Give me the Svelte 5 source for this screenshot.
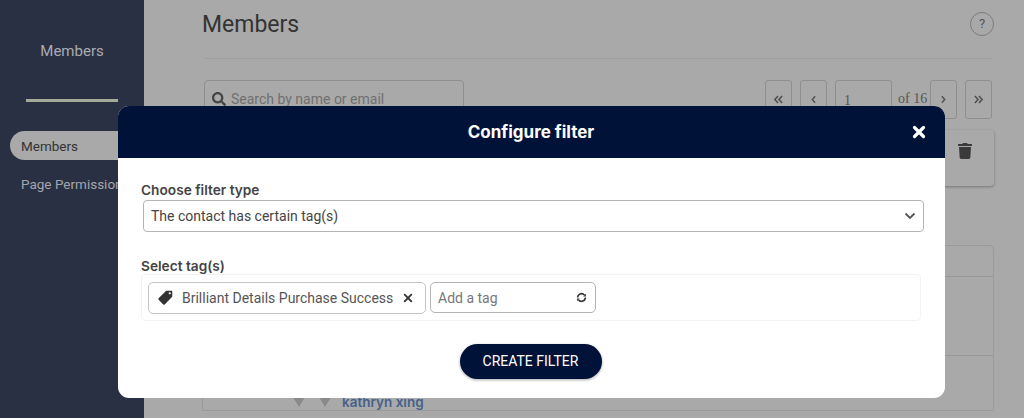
<script>
  let tags = ['Brilliant Details Purchase Success'];
</script>

<div class="page">
  <aside class="sidebar">
    <div class="side-title">Members</div>
    <div class="side-rule"></div>
    <nav class="side-nav">
      <div class="side-item active">Members</div>
      <div class="side-item">Page Permissions</div>
    </nav>
  </aside>

  <main class="main">
    <header class="head">
      <h1>Members</h1>
      <span class="help">?</span>
    </header>

    <div class="toolbar">
      <div class="search">
        <svg viewBox="0 0 512 512" width="14" height="14"><path d="M505 442.700L405.300 343c-4.500-4.500-10.600-7-17-7H372c27.600-35.300 44-79.700 44-128C416 93.100 322.900 0 208 0S0 93.100 0 208s93.100 208 208 208c48.300 0 92.700-16.400 128-44v16.300c0 6.400 2.500 12.500 7 17l99.700 99.700c9.400 9.400 24.600 9.400 33.900 0l28.300-28.300c9.400-9.400 9.400-24.600.1-34zM208 336c-70.700 0-128-57.200-128-128 0-70.700 57.200-128 128-128 70.700 0 128 57.200 128 128 0 70.700-57.200 128-128 128z"/></svg>
        <span>Search by name or email</span>
      </div>
      <div class="pager">
        <span class="pg"><svg viewBox="0 0 10 10" width="9" height="9"><path d="M4.500 1L1 5l3.500 4M9 1L5.500 5 9 9"/></svg></span>
        <span class="pg"><svg viewBox="0 0 6 10" width="5" height="9"><path d="M5 1L1.500 5 5 9"/></svg></span>
        <span class="pg-input">1</span>
        <span class="pg-of">of 16</span>
        <span class="pg"><svg viewBox="0 0 6 10" width="5" height="9"><path d="M1 1l3.500 4L1 9"/></svg></span>
        <span class="pg"><svg viewBox="0 0 10 10" width="9" height="9"><path d="M1 1l3.500 4L1 9M5.500 1L9 5 5.500 9"/></svg></span>
      </div>
    </div>

    <div class="bulk">
      <svg viewBox="0 0 448 512" width="14" height="16"><path d="M432 32H312l-9.400-18.700A24 24 0 0 0 281.100 0H166.800a23.700 23.700 0 0 0-21.400 13.300L136 32H16A16 16 0 0 0 0 48v32a16 16 0 0 0 16 16h416a16 16 0 0 0 16-16V48a16 16 0 0 0-16-16zM53.200 467a48 48 0 0 0 47.900 45h245.800a48 48 0 0 0 47.900-45L416 128H32z"/></svg>
    </div>

    <div class="table">
      <div class="row head-row"></div>
      <div class="row tall"></div>
      <div class="row member">
        <span class="tri"></span>
        <span class="tri"></span>
        <a href="#member">kathryn xing</a>
      </div>
    </div>
  </main>

  <section class="modal">
    <div class="modal-head">
      <h2>Configure filter</h2>
      <svg class="close" viewBox="0 0 14 14" width="14" height="14"><path d="M2.500 2.500l9 9M11.500 2.500l-9 9" stroke="#fff" stroke-width="3.200" stroke-linecap="round" fill="none"/></svg>
    </div>
    <div class="modal-body">
      <div class="label">Choose filter type</div>
      <div class="select">
        <span>The contact has certain tag(s)</span>
        <svg viewBox="0 0 12 8" width="12" height="8"><path d="M1.500 1.500L6 6l4.500-4.500" stroke="#555" stroke-width="1.800" fill="none"/></svg>
      </div>

      <div class="label second">Select tag(s)</div>
      <div class="tag-box">
        {#each tags as tag}
          <div class="tag">
            <svg viewBox="0 0 16 16" width="17" height="17"><path fill-rule="evenodd" fill="#333" d="M9.200 1.700h4.300c.5 0 .9.400.9.900v4.300c0 .3-.1.500-.3.700l-6.900 6.900c-.4.400-.9.400-1.300 0l-4.400-4.400c-.4-.4-.4-.9 0-1.300l6.900-6.900c.2-.1.500-.2.800-.2zM12 3a1 1 0 1 0 0 2 1 1 0 0 0 0-2z"/></svg>
            <span>{tag}</span>
            <svg viewBox="0 0 10 10" width="10" height="10"><path d="M1.200 1.200l7.600 7.600M8.800 1.200L1.200 8.800" stroke="#333" stroke-width="1.900" fill="none"/></svg>
          </div>
        {/each}
        <div class="tag-input">
          <span>Add a tag</span>
          <svg viewBox="0 0 12 12" width="11" height="11"><path d="M1.800 6a4.200 4.200 0 0 1 7.400-2.700M10.200 6a4.200 4.200 0 0 1-7.400 2.700" stroke="#333" stroke-width="1.700" fill="none"/><path d="M10.800 1.800v3H7.800zM1.200 10.200v-3h3z" fill="#333"/></svg>
        </div>
      </div>

      <div class="actions">
        <button type="button">CREATE FILTER</button>
      </div>
    </div>
  </section>
</div>

<style>
  :global(body) {
    margin: 0;
    background: #a9a9a9;
  }

  .page {
    position: relative;
    display: flex;
    width: 1024px;
    height: 418px;
    overflow: hidden;
    background: #a9a9a9;
    font-family: Roboto, "Liberation Sans", sans-serif;
    color: #333;
  }

  /* Sidebar */
  .sidebar {
    flex: 0 0 144px;
    padding-top: 42px;
    box-sizing: border-box;
    background: #2a3044;
  }

  .side-title {
    text-align: center;
    font-size: 15px;
    line-height: 18px;
    color: #a9abb0;
  }

  .side-rule {
    height: 3px;
    margin: 39px 26px 0;
    background: #a3ab98;
  }

  .side-nav {
    display: flex;
    flex-direction: column;
    gap: 9px;
    margin: 29px 0 0 10px;
  }

  .side-item {
    height: 29px;
    padding-left: 11px;
    font-size: 13.500px;
    line-height: 30px;
    white-space: nowrap;
    color: #a3a5ab;
  }

  .side-item.active {
    border-radius: 15px 0 0 15px;
    background: #a9a9a9;
    color: #333;
  }

  /* Page behind the overlay */
  .main {
    flex: 1;
    padding: 0 30px 0 58px;
    min-width: 0;
  }

  .head {
    display: flex;
    align-items: center;
    justify-content: space-between;
    height: 58px;
    margin: 0 2px;
    border-bottom: 1px solid #9f9f9f;
  }

  h1 {
    margin: -9px 0 0 -2px;
    font-size: 23px;
    font-weight: 400;
    color: #333;
  }

  .help {
    display: flex;
    align-items: center;
    justify-content: center;
    width: 22px;
    height: 22px;
    margin: -11px -2px 0 0;
    border: 1px solid #7c7c7c;
    border-radius: 50%;
    font-size: 13px;
    color: #555;
  }

  .toolbar {
    display: flex;
    justify-content: space-between;
    margin: 21px 2px 0;
  }

  .search {
    display: flex;
    align-items: center;
    gap: 5px;
    width: 260px;
    height: 37px;
    padding-left: 7px;
    box-sizing: border-box;
    border: 1px solid #8f8f8f;
    border-radius: 4px;
    font-size: 14px;
    color: #707070;
  }

  .search svg {
    fill: #444;
  }

  .pager {
    display: flex;
    align-items: center;
    height: 38px;
    font-family: "Liberation Serif", serif;
    font-size: 14px;
    color: #555;
  }

  .pg {
    display: flex;
    align-items: center;
    justify-content: center;
    width: 25px;
    height: 37px;
    margin-left: 8px;
    border: 1px solid #8f8f8f;
    border-radius: 3px;
  }

  .pg:first-child {
    margin-left: 0;
  }

  .pg svg {
    fill: none;
    stroke: #505050;
    stroke-width: 1.700;
  }

  .pg-input {
    width: 47px;
    height: 37px;
    margin-left: 8px;
    padding-left: 8px;
    border: 1px solid #8f8f8f;
    border-radius: 3px;
    line-height: 39px;
  }

  .pg-of {
    width: 30px;
    padding-left: 6px;
    box-sizing: border-box;
    white-space: nowrap;
  }

  .bulk {
    display: flex;
    justify-content: flex-end;
    height: 56px;
    margin: 12px 0 0 2px;
    padding: 13px 22px 0 0;
    box-sizing: border-box;
    border-radius: 4px;
    background: #a9a9a9;
    box-shadow: 0 1px 3px rgba(0, 0, 0, 0.3);
  }

  .bulk svg {
    fill: #3a3a3a;
  }

  .table {
    margin-top: 59px;
    border: 1px solid #9a9a9a;
    border-radius: 4px 4px 0 0;
  }

  .row {
    border-bottom: 1px solid #979797;
  }

  .head-row {
    height: 30px;
  }

  .tall {
    height: 78px;
  }

  .member {
    display: flex;
    align-items: center;
    gap: 14px;
    padding: 38px 0 0 90px;
    border: 0;
    font-family: Inter, "Liberation Sans", sans-serif;
    font-size: 13.500px;
    font-weight: 600;
  }

  .member a {
    margin-left: -3px;
    color: #46608c;
    text-decoration: none;
  }

  .tri {
    width: 0;
    height: 0;
    border-left: 6.500px solid transparent;
    border-right: 6.500px solid transparent;
    border-top: 10px solid #8a8a8a;
  }

  /* Modal */
  .modal {
    position: absolute;
    left: 118px;
    top: 106px;
    width: 827px;
    height: 292px;
    border-radius: 11px;
    overflow: hidden;
    background: #fff;
  }

  .modal-head {
    position: relative;
    display: flex;
    align-items: center;
    justify-content: center;
    height: 52px;
    background: #011238;
  }

  h2 {
    margin: 0 0 0 -1px;
    font-family: Inter, "Liberation Sans", sans-serif;
    font-size: 17px;
    font-weight: 700;
    color: #fff;
  }

  .close {
    position: absolute;
    right: 19px;
    top: 19px;
  }

  .modal-body {
    padding: 24px 23px 0;
  }

  .label {
    font-family: Inter, "Liberation Sans", sans-serif;
    font-size: 13.700px;
    font-weight: 600;
    line-height: 16px;
    color: #444;
  }

  .label.second {
    margin-top: 26px;
  }

  .select {
    display: flex;
    align-items: center;
    justify-content: space-between;
    height: 32px;
    margin: 2px -2px 0 2px;
    padding: 0 7px;
    box-sizing: border-box;
    border: 1px solid #b4b4b4;
    border-radius: 4px;
    font-size: 14px;
    color: #444;
  }

  .tag-box {
    display: flex;
    align-items: center;
    gap: 4px;
    height: 47px;
    margin-right: 1px;
    padding-left: 6px;
    box-sizing: border-box;
    border: 1px solid #f3f3f3;
    border-radius: 4px;
  }

  .tag {
    display: flex;
    align-items: center;
    width: 278px;
    height: 32px;
    padding-left: 8px;
    box-sizing: border-box;
    border: 1px solid #c4c4c4;
    border-radius: 5px;
    font-size: 14px;
    color: #555;
  }

  .tag span {
    margin: 0 10px 0 8px;
    white-space: nowrap;
  }

  .tag-input {
    display: flex;
    align-items: center;
    justify-content: space-between;
    width: 166px;
    height: 31px;
    padding: 0 8px 0 7px;
    box-sizing: border-box;
    border: 1.500px solid #b4b4b4;
    border-radius: 5px;
    font-size: 14px;
    color: #777;
  }

  .actions {
    display: flex;
    justify-content: center;
    margin-top: 23px;
  }

  button {
    width: 142px;
    height: 35px;
    margin-right: 2px;
    padding: 0 0 2px;
    border: 0;
    border-radius: 18px;
    background: #011238;
    box-shadow: 0 1px 3px rgba(0, 0, 0, 0.35);
    font-family: Roboto, "Liberation Sans", sans-serif;
    font-size: 14px;
    font-weight: 400;
    color: #fff;
  }
</style>
